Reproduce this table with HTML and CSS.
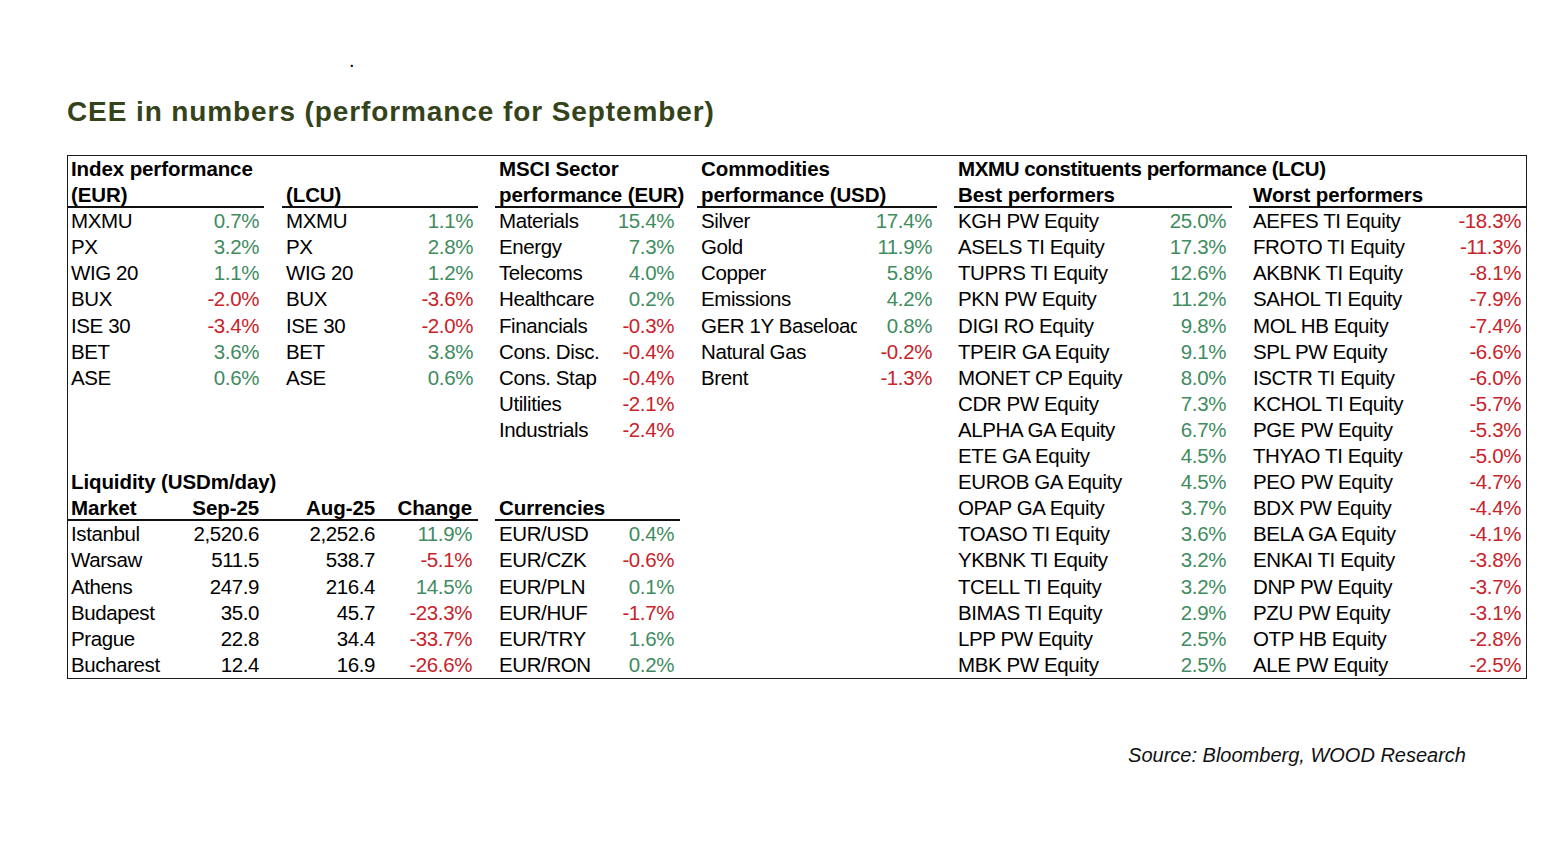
FILE: index.html
```html
<!DOCTYPE html>
<html lang="en">
<head>
<meta charset="utf-8">
<title>CEE in numbers</title>
<link rel="stylesheet" href="styles.css">
</head>
<body>
<div class="page">
  <div class="dot">.</div>
  <h1 class="title">CEE in numbers (performance for September)</h1>

  <div class="sheet">
    <!-- Left group: index performance + liquidity -->
    <div class="grp left">
      <div class="row hd">Index performance</div>
      <div class="pair">
        <div class="sub eur">
          <div class="row hd ul"><span class="lbl">(EUR)</span></div>
          <div class="row"><span class="lbl">MXMU</span><span class="val pos">0.7%</span></div>
          <div class="row"><span class="lbl">PX</span><span class="val pos">3.2%</span></div>
          <div class="row"><span class="lbl">WIG 20</span><span class="val pos">1.1%</span></div>
          <div class="row"><span class="lbl">BUX</span><span class="val neg">-2.0%</span></div>
          <div class="row"><span class="lbl">ISE 30</span><span class="val neg">-3.4%</span></div>
          <div class="row"><span class="lbl">BET</span><span class="val pos">3.6%</span></div>
          <div class="row"><span class="lbl">ASE</span><span class="val pos">0.6%</span></div>
        </div>
        <div class="sub lcu">
          <div class="row hd ul"><span class="lbl">(LCU)</span></div>
          <div class="row"><span class="lbl">MXMU</span><span class="val pos">1.1%</span></div>
          <div class="row"><span class="lbl">PX</span><span class="val pos">2.8%</span></div>
          <div class="row"><span class="lbl">WIG 20</span><span class="val pos">1.2%</span></div>
          <div class="row"><span class="lbl">BUX</span><span class="val neg">-3.6%</span></div>
          <div class="row"><span class="lbl">ISE 30</span><span class="val neg">-2.0%</span></div>
          <div class="row"><span class="lbl">BET</span><span class="val pos">3.8%</span></div>
          <div class="row"><span class="lbl">ASE</span><span class="val pos">0.6%</span></div>
        </div>
      </div>
      <div class="spacer3"></div>
      <div class="row hd">Liquidity (USDm/day)</div>
      <div class="row hd ul liq">
        <span class="c1">Market</span><span class="c2">Sep-25</span><span class="c3">Aug-25</span><span class="c4">Change</span>
      </div>
      <div class="row liq"><span class="c1">Istanbul</span><span class="c2">2,520.6</span><span class="c3">2,252.6</span><span class="c4 pos">11.9%</span></div>
      <div class="row liq"><span class="c1">Warsaw</span><span class="c2">511.5</span><span class="c3">538.7</span><span class="c4 neg">-5.1%</span></div>
      <div class="row liq"><span class="c1">Athens</span><span class="c2">247.9</span><span class="c3">216.4</span><span class="c4 pos">14.5%</span></div>
      <div class="row liq"><span class="c1">Budapest</span><span class="c2">35.0</span><span class="c3">45.7</span><span class="c4 neg">-23.3%</span></div>
      <div class="row liq"><span class="c1">Prague</span><span class="c2">22.8</span><span class="c3">34.4</span><span class="c4 neg">-33.7%</span></div>
      <div class="row liq"><span class="c1">Bucharest</span><span class="c2">12.4</span><span class="c3">16.9</span><span class="c4 neg">-26.6%</span></div>
    </div>

    <!-- MSCI sectors + currencies -->
    <div class="grp msci">
      <div class="row hd">MSCI Sector</div>
      <div class="row hd ul">performance (EUR)</div>
      <div class="row"><span class="lbl">Materials</span><span class="val pos">15.4%</span></div>
      <div class="row"><span class="lbl">Energy</span><span class="val pos">7.3%</span></div>
      <div class="row"><span class="lbl">Telecoms</span><span class="val pos">4.0%</span></div>
      <div class="row"><span class="lbl">Healthcare</span><span class="val pos">0.2%</span></div>
      <div class="row"><span class="lbl">Financials</span><span class="val neg">-0.3%</span></div>
      <div class="row"><span class="lbl">Cons. Disc.</span><span class="val neg">-0.4%</span></div>
      <div class="row"><span class="lbl cut">Cons. Staples</span><span class="val neg">-0.4%</span></div>
      <div class="row"><span class="lbl">Utilities</span><span class="val neg">-2.1%</span></div>
      <div class="row"><span class="lbl">Industrials</span><span class="val neg">-2.4%</span></div>
      <div class="spacer2"></div>
      <div class="row hd ul">Currencies</div>
      <div class="row"><span class="lbl">EUR/USD</span><span class="val pos">0.4%</span></div>
      <div class="row"><span class="lbl">EUR/CZK</span><span class="val neg">-0.6%</span></div>
      <div class="row"><span class="lbl">EUR/PLN</span><span class="val pos">0.1%</span></div>
      <div class="row"><span class="lbl">EUR/HUF</span><span class="val neg">-1.7%</span></div>
      <div class="row"><span class="lbl">EUR/TRY</span><span class="val pos">1.6%</span></div>
      <div class="row"><span class="lbl">EUR/RON</span><span class="val pos">0.2%</span></div>
    </div>

    <!-- Commodities -->
    <div class="grp comm">
      <div class="row hd">Commodities</div>
      <div class="row hd ul">performance (USD)</div>
      <div class="row"><span class="lbl">Silver</span><span class="val pos">17.4%</span></div>
      <div class="row"><span class="lbl">Gold</span><span class="val pos">11.9%</span></div>
      <div class="row"><span class="lbl">Copper</span><span class="val pos">5.8%</span></div>
      <div class="row"><span class="lbl">Emissions</span><span class="val pos">4.2%</span></div>
      <div class="row"><span class="lbl">GER 1Y Baseload</span><span class="val pos">0.8%</span></div>
      <div class="row"><span class="lbl">Natural Gas</span><span class="val neg">-0.2%</span></div>
      <div class="row"><span class="lbl">Brent</span><span class="val neg">-1.3%</span></div>
    </div>

    <!-- MXMU constituents -->
    <div class="grp mxmu">
      <div class="row hd wide">MXMU constituents performance (LCU)</div>
      <div class="pair">
        <div class="sub best">
          <div class="row hd ul"><span class="lbl">Best performers</span></div>
          <div class="row"><span class="lbl">KGH PW Equity</span><span class="val pos">25.0%</span></div>
          <div class="row"><span class="lbl">ASELS TI Equity</span><span class="val pos">17.3%</span></div>
          <div class="row"><span class="lbl">TUPRS TI Equity</span><span class="val pos">12.6%</span></div>
          <div class="row"><span class="lbl">PKN PW Equity</span><span class="val pos">11.2%</span></div>
          <div class="row"><span class="lbl">DIGI RO Equity</span><span class="val pos">9.8%</span></div>
          <div class="row"><span class="lbl">TPEIR GA Equity</span><span class="val pos">9.1%</span></div>
          <div class="row"><span class="lbl">MONET CP Equity</span><span class="val pos">8.0%</span></div>
          <div class="row"><span class="lbl">CDR PW Equity</span><span class="val pos">7.3%</span></div>
          <div class="row"><span class="lbl">ALPHA GA Equity</span><span class="val pos">6.7%</span></div>
          <div class="row"><span class="lbl">ETE GA Equity</span><span class="val pos">4.5%</span></div>
          <div class="row"><span class="lbl">EUROB GA Equity</span><span class="val pos">4.5%</span></div>
          <div class="row"><span class="lbl">OPAP GA Equity</span><span class="val pos">3.7%</span></div>
          <div class="row"><span class="lbl">TOASO TI Equity</span><span class="val pos">3.6%</span></div>
          <div class="row"><span class="lbl">YKBNK TI Equity</span><span class="val pos">3.2%</span></div>
          <div class="row"><span class="lbl">TCELL TI Equity</span><span class="val pos">3.2%</span></div>
          <div class="row"><span class="lbl">BIMAS TI Equity</span><span class="val pos">2.9%</span></div>
          <div class="row"><span class="lbl">LPP PW Equity</span><span class="val pos">2.5%</span></div>
          <div class="row"><span class="lbl">MBK PW Equity</span><span class="val pos">2.5%</span></div>
        </div>
        <div class="sub worst">
          <div class="row hd ul"><span class="lbl">Worst performers</span></div>
          <div class="row"><span class="lbl">AEFES TI Equity</span><span class="val neg">-18.3%</span></div>
          <div class="row"><span class="lbl">FROTO TI Equity</span><span class="val neg">-11.3%</span></div>
          <div class="row"><span class="lbl">AKBNK TI Equity</span><span class="val neg">-8.1%</span></div>
          <div class="row"><span class="lbl">SAHOL TI Equity</span><span class="val neg">-7.9%</span></div>
          <div class="row"><span class="lbl">MOL HB Equity</span><span class="val neg">-7.4%</span></div>
          <div class="row"><span class="lbl">SPL PW Equity</span><span class="val neg">-6.6%</span></div>
          <div class="row"><span class="lbl">ISCTR TI Equity</span><span class="val neg">-6.0%</span></div>
          <div class="row"><span class="lbl">KCHOL TI Equity</span><span class="val neg">-5.7%</span></div>
          <div class="row"><span class="lbl">PGE PW Equity</span><span class="val neg">-5.3%</span></div>
          <div class="row"><span class="lbl">THYAO TI Equity</span><span class="val neg">-5.0%</span></div>
          <div class="row"><span class="lbl">PEO PW Equity</span><span class="val neg">-4.7%</span></div>
          <div class="row"><span class="lbl">BDX PW Equity</span><span class="val neg">-4.4%</span></div>
          <div class="row"><span class="lbl">BELA GA Equity</span><span class="val neg">-4.1%</span></div>
          <div class="row"><span class="lbl">ENKAI TI Equity</span><span class="val neg">-3.8%</span></div>
          <div class="row"><span class="lbl">DNP PW Equity</span><span class="val neg">-3.7%</span></div>
          <div class="row"><span class="lbl">PZU PW Equity</span><span class="val neg">-3.1%</span></div>
          <div class="row"><span class="lbl">OTP HB Equity</span><span class="val neg">-2.8%</span></div>
          <div class="row"><span class="lbl">ALE PW Equity</span><span class="val neg">-2.5%</span></div>
        </div>
      </div>
    </div>
  </div>

  <div class="source">Source: Bloomberg, WOOD Research</div>
</div>
</body>
</html>
```
FILE: styles.css
```css
* { box-sizing: border-box; }

body {
  margin: 0;
  background: #ffffff;
  color: #000000;
  font-family: "Liberation Sans", Arial, sans-serif;
}

.page {
  padding: 49px 0 40px 67px;
}

.dot {
  padding-left: 282px;
  font-size: 20px;
  line-height: 23px;
  height: 23px;
}

.title {
  margin: 24px 0 0;
  font-size: 28px;
  line-height: 32px;
  font-weight: 700;
  letter-spacing: 0.9px;
  color: #34431a;
}

.sheet {
  margin-top: 27px;
  width: 1460px;
  border: 1px solid #1b1b1b;
  display: flex;
  align-items: flex-start;
  gap: 17px;
  font-size: 20.5px;
  letter-spacing: -0.4px;
}

.grp { display: flex; flex-direction: column; }
.left { width: 410px; }
.msci { width: 185px; }
.comm { width: 240px; }
.mxmu { width: 572px; }

.pair { display: flex; }
.left .pair { gap: 18px; }
.mxmu .pair { gap: 17px; }
.eur, .lcu { width: 196px; }
.best { width: 278px; }
.worst { width: 277px; }

.row {
  display: flex;
  height: 26.1px;
  line-height: 25.6px;
  white-space: nowrap;
  padding-left: 4px;
}

.row:has(.lbl) { padding-left: 0; }

.hd { font-weight: 700; letter-spacing: -0.1px; }
.wide { letter-spacing: -0.4px; }
.ul { border-bottom: 2px solid #111111; }

.lbl {
  flex: 1 1 0;
  min-width: 0;
  overflow: hidden;
  padding-left: 4px;
}

.lbl.cut { flex: 0 0 102px; }

.eur .lbl { padding-left: 3px; }
.left > .row { padding-left: 3px; }

.val {
  flex: none;
  margin-left: auto;
  text-align: right;
  padding-right: 5px;
}

.eur .val, .lcu .val { width: 80px; }
.msci .val { width: 80px; padding-right: 6px; }
.comm .val { width: 80px; }
.best .val { width: 90px; padding-right: 6px; }
.worst .val { width: 90px; }

.pos { color: #3f8c5f; }
.neg { color: #c8232b; }

.spacer2 { height: 52.2px; }
.spacer3 { height: 78.3px; }

.left > .liq { padding-left: 0; }
.c1 { width: 117px; padding-left: 3px; }
.c2 { width: 78px; text-align: right; padding-right: 4px; }
.c3 { width: 117px; text-align: right; padding-right: 5px; }
.c4 { width: 98px; text-align: right; padding-right: 6px; }

.source {
  margin-top: 65px;
  width: 1460px;
  padding-right: 61px;
  text-align: right;
  font-style: italic;
  font-size: 20px;
  line-height: 23px;
  color: #111111;
}
```
